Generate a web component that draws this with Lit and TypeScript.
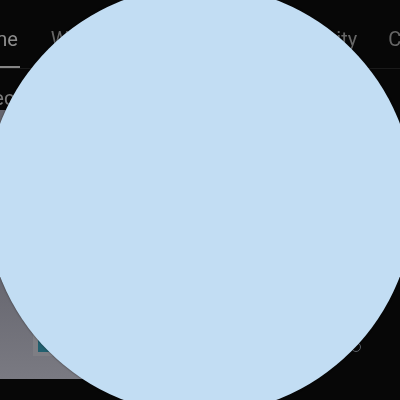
import { LitElement, html, css } from "lit";
import { customElement } from "lit/decorators.js";

@customElement("app-root")
export class AppRoot extends LitElement {
  static styles = css`
    :host { display: block; width: 400px; height: 400px; font-family: Roboto, "Liberation Sans", sans-serif; }
    .page { position: relative; width: 400px; height: 400px; overflow: hidden; background: #070707; }
    .tabs { display: flex; height: 69px; box-sizing: border-box; border-bottom: 1px solid #1a1a1a; margin-left: -38px; width: 500px; gap: 29px; }
    .tab { height: 68px; box-sizing: border-box; padding: 28px 2px 0; font-size: 20px; line-height: 23px; color: #666; white-space: nowrap; flex: none; filter: blur(.4px); }
    .tab.active { border-bottom: 2px solid #858585; color: #8c8c8c; }
    .tab.wide { width: 221px; margin-right: -2px; text-align: right; }
    .heading { margin: 18px 0 0 -19px; font-size: 20px; line-height: 23px; color: #7a7a7a; white-space: nowrap; filter: blur(.4px); }
    .card { display: flex; align-items: flex-end; width: 110px; height: 269px; padding: 0 0 23px 33px; box-sizing: border-box; background: linear-gradient(#66666f 60%, #7a7a82 100%); }
    .frame { position: relative; display: flex; width: 40px; height: 40px; box-sizing: border-box; padding: 10px 5px 4px; background: #7e7e84; }
    .thumb { flex: 1; background: #22606f; }
    .dot { position: absolute; left: 6px; top: 9px; width: 3px; height: 3px; border-radius: 50%; background: #0a0a0a; }
    .ring { position: absolute; left: 351px; top: 342px; width: 10px; height: 10px; box-sizing: border-box; border: 1px solid #5c6066; border-radius: 50%; }
    .circle { position: absolute; left: -14.5px; top: -14.5px; width: 428px; height: 428px; border-radius: 50%; background: #c2ddf3; box-shadow: 0 0 2px rgba(0,0,0,.6); }
  `;
  render() {
    return html`<div class="page">
      <nav class="tabs">
        <span class="tab active">Home</span>
        <span class="tab">Watch</span>
        <span class="tab wide">Community</span>
        <span class="tab">Courses</span>
      </nav>
      <div class="heading">Recommended</div>
      <div class="card"><div class="frame"><div class="thumb"></div><div class="dot"></div></div></div>
      <div class="ring"></div>
      <div class="circle"></div>
    </div>`;
  }
}
